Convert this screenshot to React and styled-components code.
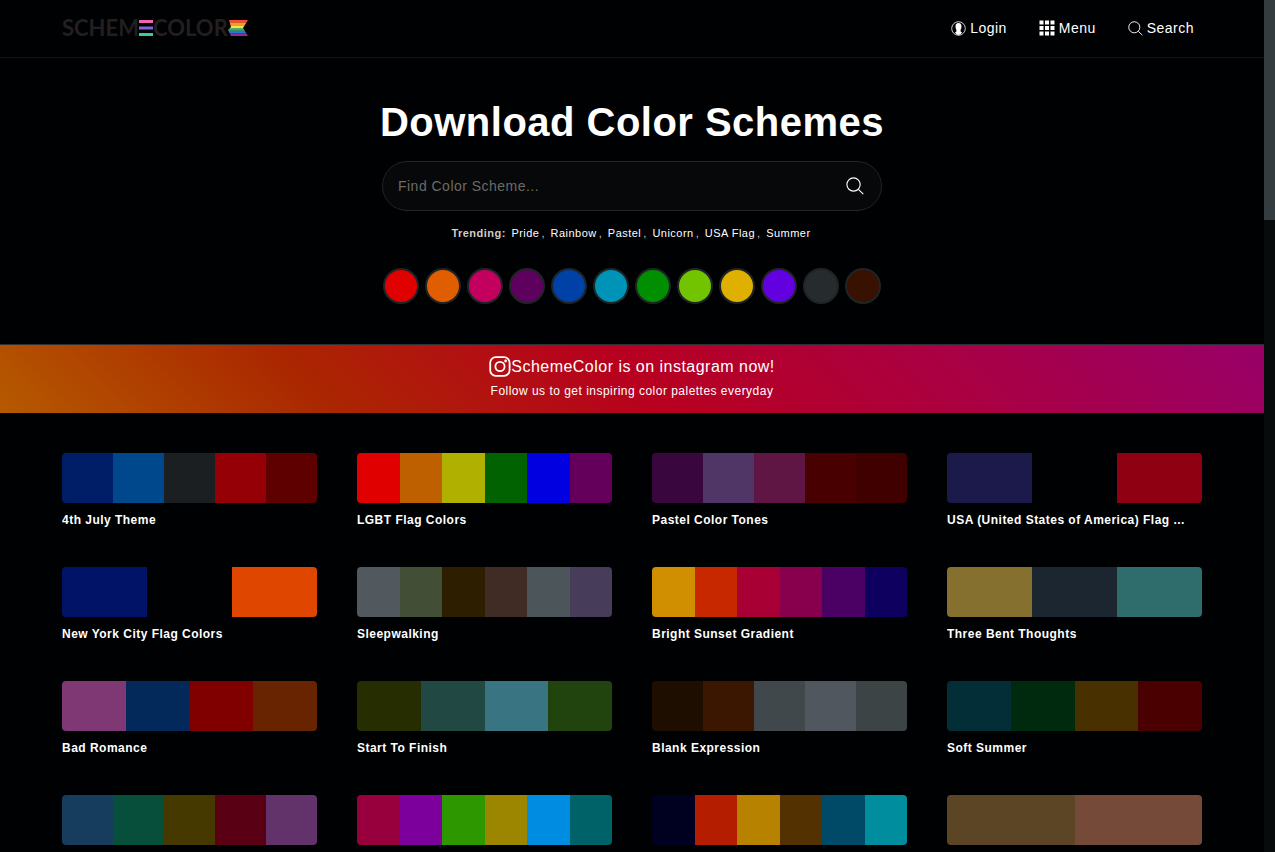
import React from "react";
import styled, { createGlobalStyle } from "styled-components";

const GlobalStyle = createGlobalStyle`
  *, *::before, *::after { box-sizing: border-box; }
  html { scrollbar-width: none; background: #000; }
  body {
    margin: 0;
    background: #000102;
    color: #fff;
    font-family: "Liberation Sans", Arial, sans-serif;
    font-size: 16px;
    letter-spacing: 0.03em;
  }
  a { color: inherit; text-decoration: none; }
`;

const Shell = styled.div`
  display: flex;
  align-items: flex-start;
`;

const Page = styled.div`
  flex: 1;
  min-width: 0;
`;

const ScrollTrack = styled.div`
  position: sticky;
  top: 0;
  flex: 0 0 11px;
  height: 100vh;
  background: #080b0c;
`;

const ScrollThumb = styled.div`
  height: 220px;
  background: #343c3f;
`;

const Container = styled.div`
  max-width: 1180px;
  margin: 0 auto;
  padding: 0 20px;
`;

const Header = styled.header`
  padding-bottom: 1px;
  border-bottom: 1px solid #121415;
`;

const HeaderRow = styled(Container)`
  display: flex;
  align-items: center;
  justify-content: space-between;
  height: 56px;
`;

const Logo = styled.a`
  display: flex;
  align-items: center;
  color: #231f20;
  font-family: Lato, sans-serif;
  font-size: 22px;
  font-weight: 700;
  line-height: 24px;
  letter-spacing: 0;
`;

const Nav = styled.nav`
  display: flex;
  gap: 32px;
  padding-right: 8px;
`;

const NavLink = styled.a`
  display: flex;
  align-items: center;
  gap: 4px;
  font-size: 14px;
  line-height: 20px;
`;

const Hero = styled.section`
  display: flex;
  flex-direction: column;
  align-items: center;
  padding: 40px 20px;
`;

const Title = styled.h1`
  margin: 0;
  font-size: 40px;
  line-height: 48px;
`;

const SearchForm = styled.form`
  display: flex;
  align-items: center;
  width: 100%;
  max-width: 500px;
  height: 50px;
  margin-top: 15px;
  padding: 0 17px 0 15px;
  border: 1px solid #222526;
  border-radius: 25px;
  background: #060809;
`;

const SearchInput = styled.input`
  flex: 1;
  min-width: 0;
  padding: 0;
  border: 0;
  outline: 0;
  background: transparent;
  color: #fff;
  font: inherit;
  font-size: 14px;
  letter-spacing: inherit;
  &::placeholder { color: #6d6a66; opacity: 1; }
`;

const SearchButton = styled.button`
  display: flex;
  padding: 0;
  border: 0;
  background: none;
  color: #fff;
  cursor: pointer;
`;

const Trending = styled.p`
  margin: 15px 0 0;
  color: #d0ccc6;
  font-size: 11px;
  line-height: 14px;
  a { margin: 0 2px; color: #fff; }
`;

const Dots = styled.div`
  display: flex;
  flex-wrap: wrap;
  justify-content: center;
  gap: 6px;
  margin-top: 28px;
`;

const Dot = styled.a`
  width: 36px;
  height: 36px;
  border: 2px solid #1f2426;
  border-radius: 50%;
  background: ${(p) => p.$color};
`;

const Banner = styled.a`
  display: flex;
  flex-direction: column;
  align-items: center;
  height: 69px;
  padding-top: 11px;
  border-top: 1px solid #2b3134;
  background: linear-gradient(45deg, #b55a00 0%, #aa2700 25%, #b8001f 50%, #aa0044 75%, #980068 100%);
`;

const BannerTitle = styled.span`
  display: flex;
  align-items: center;
  line-height: 22px;
`;

const BannerText = styled.span`
  margin-top: 5px;
  font-size: 12px;
  line-height: 16px;
`;

const Grid = styled(Container)`
  display: grid;
  grid-template-columns: repeat(4, minmax(0, 1fr));
  gap: 40px;
  padding-top: 40px;
  padding-bottom: 40px;
`;

const Strip = styled.div`
  display: flex;
  height: 50px;
  border-radius: 4px;
  overflow: hidden;
`;

const Swatch = styled.span`
  flex: 1;
  background: ${(p) => p.$color};
`;

const SchemeName = styled.div`
  margin-top: 10px;
  overflow: hidden;
  font-size: 12px;
  font-weight: 700;
  line-height: 14px;
  white-space: nowrap;
  text-overflow: ellipsis;
`;

const trending = ["Pride", "Rainbow", "Pastel", "Unicorn", "USA Flag", "Summer"];

const dots = [
  ["Red", "#e00000"], ["Orange", "#e05e00"], ["Pink", "#c4005f"], ["Purple", "#5e005e"],
  ["Blue", "#0041a8"], ["Cyan", "#0093b8"], ["Green", "#008f00"], ["Lime", "#72c400"],
  ["Yellow", "#e0b000"], ["Violet", "#6200e0"], ["Gray", "#262c2e"], ["Brown", "#381100"],
];

const schemes = [
  { name: "4th July Theme", colors: ["#001e67", "#00488c", "#1b1f21", "#950006", "#5f0000"] },
  { name: "LGBT Flag Colors", colors: ["#e00000", "#bf6000", "#b0b000", "#006200", "#0000e0", "#64005c"] },
  { name: "Pastel Color Tones", colors: ["#3a063e", "#4f3667", "#5f1644", "#480000", "#400000"] },
  { name: "USA (United States of America) Flag ...", colors: ["#1b1a4b", "#000102", "#8f0012"] },
  { name: "New York City Flag Colors", colors: ["#001367", "#000102", "#df4600"] },
  { name: "Sleepwalking", colors: ["#51595e", "#424f36", "#2d1e00", "#402b25", "#4c565a", "#473d5b"] },
  { name: "Bright Sunset Gradient", colors: ["#d08f00", "#c72800", "#a80034", "#88004d", "#4b0064", "#0e005e"] },
  { name: "Three Bent Thoughts", colors: ["#85702f", "#1b2631", "#2e6d6b"] },
  { name: "Bad Romance", colors: ["#7f3874", "#03285a", "#800000", "#682400"] },
  { name: "Start To Finish", colors: ["#262d00", "#214843", "#397483", "#21440e"] },
  { name: "Blank Expression", colors: ["#1d0e00", "#3b1600", "#40484b", "#50575e", "#3c4446"] },
  { name: "Soft Summer", colors: ["#032e37", "#002a0e", "#483000", "#4a0000"] },
  { colors: ["#163c5e", "#074f3a", "#463900", "#5a0014", "#62326b"] },
  { colors: ["#97003c", "#7b009c", "#2d9700", "#9c8600", "#008ce0", "#006269"] },
  { colors: ["#000020", "#b41d00", "#b68200", "#533100", "#004a68", "#008d9e"] },
  { colors: ["#5b4524", "#754a39"] },
];

const LogoBars = () => (
  <svg width="14" height="16" viewBox="0 0 14 16" aria-hidden="true">
    <rect width="14" height="3" fill="#ee64ae" />
    <rect y="6.5" width="14" height="3" fill="#8562dc" />
    <rect y="13" width="14" height="3" fill="#3bcb9b" />
  </svg>
);

const FLAG = ["#f44e38", "#f89a2c", "#f8e045", "#4fae58", "#2677cf", "#8c2c9d"];

const LogoFlag = () => (
  <svg width="20" height="16" viewBox="0 0 20 16" aria-hidden="true">
    <clipPath id="ribbon"><path d="M1 0H20L15 8L20 16H3L0 10L3 7Z" /></clipPath>
    <g clipPath="url(#ribbon)">
      {FLAG.map((c, i) => <rect key={c} y={(i * 16) / 6} width="20" height="2.8" fill={c} />)}
    </g>
  </svg>
);

const UserIcon = () => (
  <svg width="15" height="15" viewBox="0 0 15 15" aria-hidden="true">
    <circle cx="7.5" cy="7.5" r="6.8" fill="none" stroke="currentColor" strokeWidth="0.8" />
    <path d="M7.5 2C5.4 2 4.4 3.4 4.5 5.4C4.6 7 4.9 8 5.4 8.7V10.6L4 11.6C4.9 13.2 6 14 7.5 14S10.1 13.2 11 11.6L9.6 10.6V8.7C10.1 8 10.4 7 10.5 5.4C10.6 3.4 9.6 2 7.5 2Z" fill="currentColor" />
  </svg>
);

const GridIcon = () => (
  <svg width="16" height="16" viewBox="0 0 16 16" fill="currentColor" aria-hidden="true">
    {[0.5, 6, 11.5].map((y) => [0.5, 6, 11.5].map((x) => <rect key={`${x}-${y}`} x={x} y={y} width="4" height="4" />))}
  </svg>
);

const SearchIcon = ({ size }) => (
  <svg width={size} height={size} viewBox="0 0 16 16" fill="none" stroke="currentColor" aria-hidden="true">
    <circle cx="6.7" cy="6.7" r="5.9" />
    <path d="M11 11L15.4 15.2" />
  </svg>
);

const InstagramIcon = () => (
  <svg width="22" height="22" viewBox="0 0 22 22" fill="none" stroke="currentColor" strokeWidth="1.8" aria-hidden="true">
    <rect x="1.2" y="1.2" width="19.4" height="18.6" rx="5.5" />
    <circle cx="11" cy="10.5" r="4.6" />
    <circle cx="16.6" cy="5" r="1.4" fill="currentColor" stroke="none" />
  </svg>
);

export default function App() {
  return (
    <Shell>
      <GlobalStyle />
      <Page>
        <Header>
          <HeaderRow>
            <Logo href="#" aria-label="SchemeColor">
              SCHEM<LogoBars />COLOR<LogoFlag />
            </Logo>
            <Nav>
              <NavLink href="#"><UserIcon />Login</NavLink>
              <NavLink href="#"><GridIcon />Menu</NavLink>
              <NavLink href="#"><SearchIcon size={15} />Search</NavLink>
            </Nav>
          </HeaderRow>
        </Header>
        <main>
          <Hero>
            <Title>Download Color Schemes</Title>
            <SearchForm role="search">
              <SearchInput type="text" placeholder="Find Color Scheme..." aria-label="Find Color Scheme" />
              <SearchButton type="button" aria-label="Search"><SearchIcon size={18} /></SearchButton>
            </SearchForm>
            <Trending>
              <strong>Trending:</strong>
              {trending.map((t, i) => (
                <React.Fragment key={t}>
                  {" "}<a href="#">{t}</a>{i < trending.length - 1 && ","}
                </React.Fragment>
              ))}
            </Trending>
            <Dots>
              {dots.map(([name, color]) => <Dot key={name} href="#" aria-label={name} $color={color} />)}
            </Dots>
          </Hero>
          <Banner href="#">
            <BannerTitle><InstagramIcon />SchemeColor is on instagram now!</BannerTitle>
            <BannerText>Follow us to get inspiring color palettes everyday</BannerText>
          </Banner>
          <Grid>
            {schemes.map((s, i) => (
              <a href="#" key={i} aria-label={s.name || "Color scheme"}>
                <Strip>{s.colors.map((c) => <Swatch key={c} $color={c} />)}</Strip>
                {s.name && <SchemeName>{s.name}</SchemeName>}
              </a>
            ))}
          </Grid>
        </main>
      </Page>
      <ScrollTrack><ScrollThumb /></ScrollTrack>
    </Shell>
  );
}
